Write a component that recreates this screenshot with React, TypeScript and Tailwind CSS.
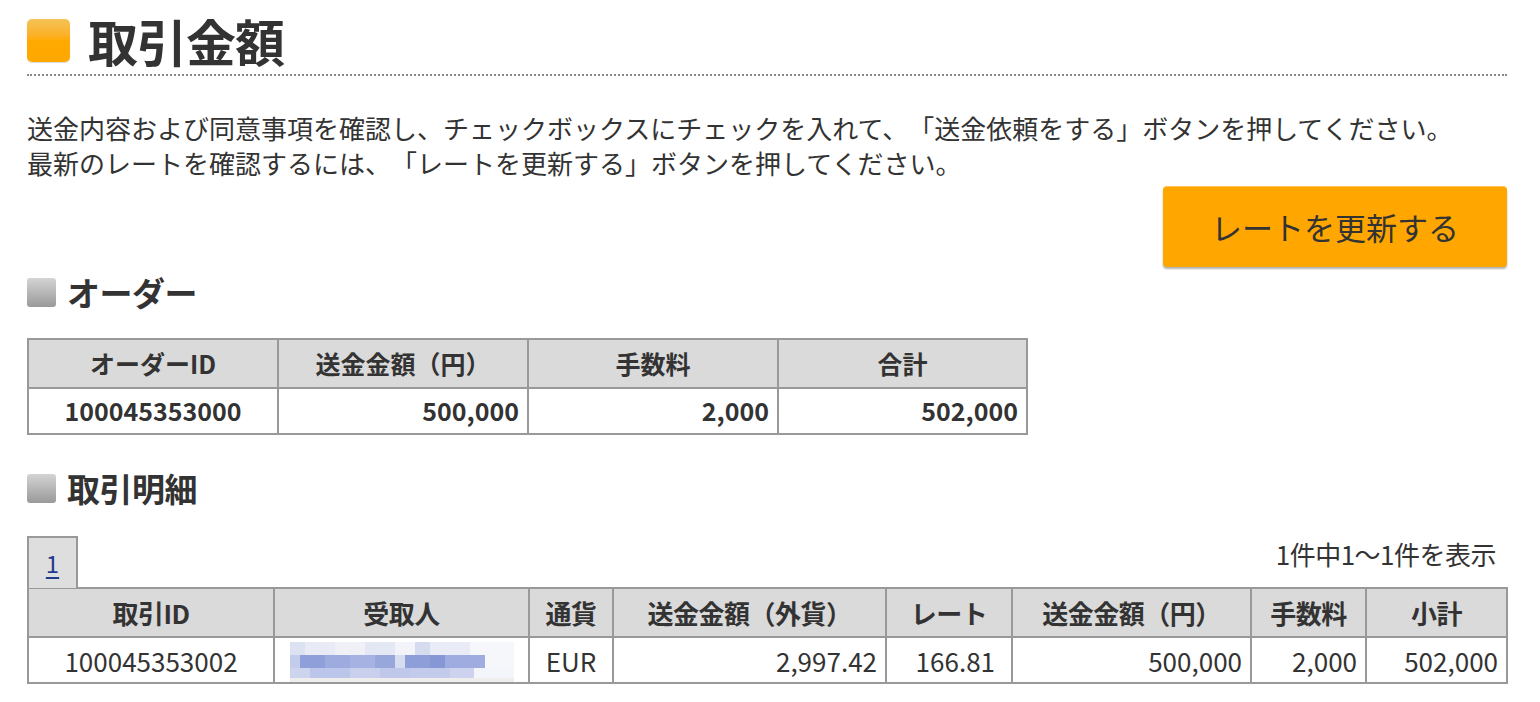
import React from "react";

const font = { fontFamily: '"Noto Sans CJK JP", "Noto Sans", sans-serif' };

const SubHeading: React.FC<{ title: string; className?: string }> = ({ title, className }) => (
  <div className={`flex items-center h-[34px] gap-[11px] ${className ?? ""}`}>
    <div className="w-[29px] h-[29px] rounded-[3px] bg-gradient-to-b from-[#d4d4d4] to-[#9a9a9a]" />
    <h2 className="text-[33px] font-bold text-[#333] leading-none tracking-[-0.5px]">{title}</h2>
  </div>
);

const BlurredName: React.FC = () => (
  <div className="flex flex-col w-[224px] h-[40px] mx-auto blur-[0.6px]">
    <div className="flex h-[13px]">
      <div className="w-[15px] bg-[#dde2f2]" />
      <div className="w-[30px] bg-[#e8ebf5]" />
      <div className="w-[30px] bg-[#eff1f7]" />
      <div className="w-[30px] bg-[#e4e8f4]" />
      <div className="w-[20px] bg-[#f3f4f9]" />
      <div className="w-[15px] bg-[#d6dcef]" />
      <div className="w-[40px] bg-[#e9ecf6]" />
      <div className="w-[44px] bg-[#f6f7fb]" />
    </div>
    <div className="flex h-[13px]">
      <div className="w-[10px] bg-[#c4cceb]" />
      <div className="w-[25px] bg-[#8f9fd9]" />
      <div className="w-[25px] bg-[#9dabde]" />
      <div className="w-[25px] bg-[#a6b2e1]" />
      <div className="w-[20px] bg-[#97a6db]" />
      <div className="w-[10px] bg-[#d7ddf1]" />
      <div className="w-[25px] bg-[#8e9ed8]" />
      <div className="w-[15px] bg-[#8797d6]" />
      <div className="w-[40px] bg-[#9eacdf]" />
      <div className="w-[29px] bg-[#f6f7fb]" />
    </div>
    <div className="flex h-[10px]">
      <div className="w-[20px] bg-[#cdd4ee]" />
      <div className="w-[40px] bg-[#bcc6ea]" />
      <div className="w-[30px] bg-[#c8d0ee]" />
      <div className="w-[30px] bg-[#bfc8eb]" />
      <div className="w-[40px] bg-[#c3cbec]" />
      <div className="w-[24px] bg-[#cdd3ef]" />
      <div className="w-[40px] bg-[#f4f5fa]" />
    </div>
    <div className="h-[4px] bg-[#f0eeec]" />
  </div>
);

export default function App() {
  const th = "border-2 border-[#999] bg-[#dadada] font-bold text-center h-[49px] p-0";
  const td = "border-2 border-[#999] bg-white h-[46px] py-0";

  return (
    <div style={font} className="w-[1540px] h-[702px] bg-white text-[#333] pl-[27px] pr-[33px] overflow-hidden [text-spacing-trim:space-all]">
      <div className="flex items-center h-[46px] mt-[17px] gap-[18px]">
        <div className="w-[43px] h-[43px] rounded-[5px] bg-gradient-to-b from-[#f3c354] via-[#ffaa00] to-[#ffa800] shadow-[0_1px_1px_rgba(0,0,0,0.15)]" />
        <h1 className="text-[50px] font-bold leading-none text-[#333] tracking-[-1px]">取引金額</h1>
      </div>
      <div className="mt-[11px] border-t-2 border-dotted border-[#888]" />

      <p className="mt-[34px] text-[26px] leading-[35px]">
        送金内容および同意事項を確認し、チェックボックスにチェックを入れて、「送金依頼をする」ボタンを押してください。
        <br />
        最新のレートを確認するには、「レートを更新する」ボタンを押してください。
      </p>

      <div className="flex justify-end mt-[6px]">
        <button className="w-[344px] h-[81px] rounded-[4px] bg-[#ffa700] text-[31px] text-[#333] shadow-[0_2px_2px_rgba(0,0,0,0.3)] border-t border-[#ffc34d]">
          レートを更新する
        </button>
      </div>

      <SubHeading title="オーダー" className="mt-[8px]" />

      <table className="mt-[29px] border-collapse table-fixed w-[999px] text-[25px]">
        <thead>
          <tr>
            <th className={`${th} w-[250px]`}>オーダーID</th>
            <th className={`${th} w-[250px]`}>送金金額（円）</th>
            <th className={`${th} w-[250px]`}>手数料</th>
            <th className={`${th} w-[249px]`}>合計</th>
          </tr>
        </thead>
        <tbody className="font-bold">
          <tr>
            <td className={`${td} text-center`}>100045353000</td>
            <td className={`${td} text-right pr-[8px]`}>500,000</td>
            <td className={`${td} text-right pr-[8px]`}>2,000</td>
            <td className={`${td} text-right pr-[8px]`}>502,000</td>
          </tr>
        </tbody>
      </table>

      <SubHeading title="取引明細" className="mt-[36px]" />

      <div className="flex items-end justify-between mt-[29px]">
        <div className="w-[51px] h-[52px] border-2 border-b-0 border-[#999] bg-[#dedede] flex items-center justify-center -mb-[1px]">
          <a href="#" className="text-[24px] text-[#1f3a8f] underline underline-offset-4">1</a>
        </div>
        <div className="text-[26px] tracking-[-0.5px] pr-[11px] pb-[14px]">1件中1～1件を表示</div>
      </div>

      <table className="border-collapse table-fixed w-[1479px] text-[26px]">
        <thead>
          <tr className="tracking-[-0.5px]">
            <th className={`${th} w-[246px]`}>取引ID</th>
            <th className={`${th} w-[255px]`}>受取人</th>
            <th className={`${th} w-[84px]`}>通貨</th>
            <th className={`${th} w-[273px]`}>送金金額（外貨）</th>
            <th className={`${th} w-[126px]`}>レート</th>
            <th className={`${th} w-[239px]`}>送金金額（円）</th>
            <th className={`${th} w-[115px]`}>手数料</th>
            <th className={`${th} w-[141px]`}>小計</th>
          </tr>
        </thead>
        <tbody>
          <tr>
            <td className={`${td} text-center`}>100045353002</td>
            <td className={`${td} px-0 align-bottom`}>
              <BlurredName />
            </td>
            <td className={`${td} text-center`}>EUR</td>
            <td className={`${td} text-right pr-[8px]`}>2,997.42</td>
            <td className={`${td} text-right pr-[16px]`}>166.81</td>
            <td className={`${td} text-right pr-[8px]`}>500,000</td>
            <td className={`${td} text-right pr-[8px]`}>2,000</td>
            <td className={`${td} text-right pr-[8px]`}>502,000</td>
          </tr>
        </tbody>
      </table>
    </div>
  );
}
